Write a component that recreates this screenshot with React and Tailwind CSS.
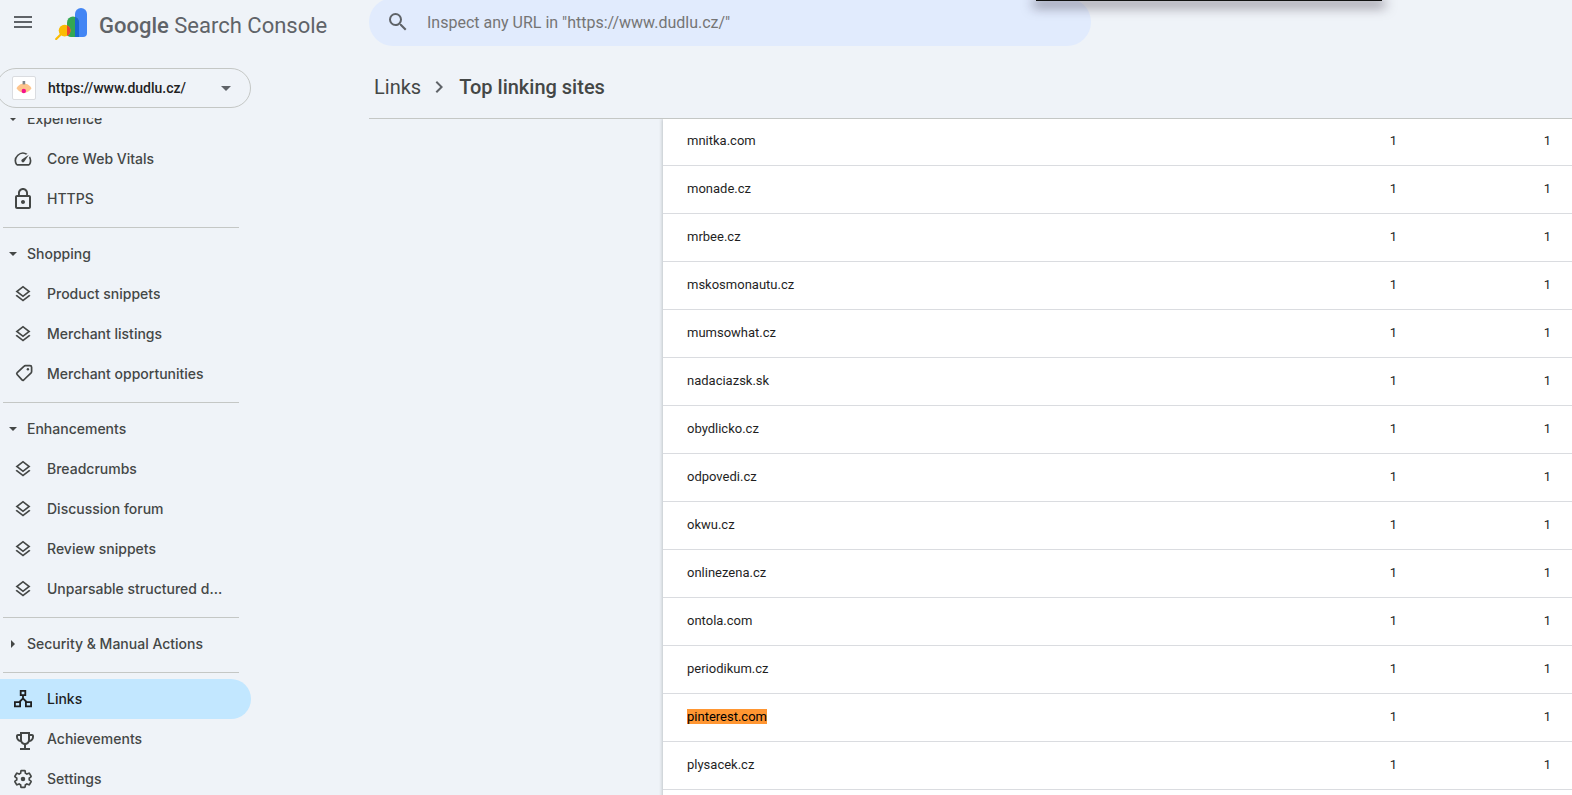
import React from "react";
import { MdMenu, MdSearch, MdChevronRight, MdOutlineSpeed, MdOutlineLayers, MdLockOutline } from "react-icons/md";

const TagIcon = () => (
  <svg viewBox="0 0 24 24" className="size-6" fill="none" stroke="currentColor" strokeWidth="1.7" strokeLinejoin="round" aria-hidden="true">
    <path d="M14.4 3.700H19Q20.600 3.700 20.600 5.300V9.600Q20.600 10.300 20.100 10.900L12.700 18Q11.800 18.800 11 17.900L6.100 12.500Q5.300 11.600 6.200 10.700L12.900 4.300Q13.500 3.700 14.400 3.700Z" />
    <circle cx="16.900" cy="7.300" r="1.200" fill="currentColor" stroke="none" />
  </svg>
);

const LinksIcon = () => (
  <svg viewBox="0 0 24 24" className="size-6" fill="none" stroke="currentColor" strokeWidth="1.8" aria-hidden="true">
    <path d="M9.7 3.9h4.6v4.2H9.7zM3.9 15.1h5.2v4.2H3.9zM14.9 15.1h5.2v4.2h-5.2z" />
    <path d="M12 8.5v3.4M12.3 11.2L8.4 15M11.7 11.2l3.9 3.8" />
  </svg>
);

const TrophyIcon = () => (
  <svg viewBox="-2 -2 24 24" className="size-6" fill="currentColor" aria-hidden="true">
    <path d="M19 5h-2V3H7v2H5c-1.1 0-2 .9-2 2v1c0 2.55 1.92 4.63 4.39 4.94A5.01 5.01 0 0 0 11 15.9V19H7v2h10v-2h-4v-3.1a5.01 5.01 0 0 0 3.61-2.96C19.08 12.63 21 10.55 21 8V7c0-1.1-.9-2-2-2zM5 8V7h2v3.82C5.84 10.4 5 9.3 5 8zm7 6c-1.65 0-3-1.35-3-3V5h6v6c0 1.65-1.35 3-3 3zm7-6c0 1.3-.84 2.4-2 2.82V7h2v1z" />
  </svg>
);

const GearIcon = () => (
  <svg viewBox="1 1 22 22" className="size-5" fill="none" stroke="currentColor" strokeWidth="2" aria-hidden="true">
    <path transform="translate(12 12) scale(.92) translate(-12 -12)" d="M19.43 12.98c.04-.32.07-.64.07-.98 0-.34-.03-.66-.07-.98l2.11-1.65c.19-.15.24-.42.12-.64l-2-3.46a.5.5 0 0 0-.61-.22l-2.49 1c-.52-.4-1.08-.73-1.69-.98l-.38-2.65A.488.488 0 0 0 14 2h-4c-.25 0-.46.18-.49.42l-.38 2.65c-.61.25-1.17.59-1.69.98l-2.49-1a.566.566 0 0 0-.18-.03c-.17 0-.34.09-.43.25l-2 3.46c-.13.22-.07.49.12.64l2.11 1.65c-.04.32-.07.65-.07.98 0 .33.03.66.07.98l-2.11 1.65c-.19.15-.24.42-.12.64l2 3.46a.5.5 0 0 0 .61.22l2.49-1c.52.4 1.08.73 1.69.98l.38 2.65c.03.24.24.42.49.42h4c.25 0 .46-.18.49-.42l.38-2.65c.61-.25 1.17-.59 1.69-.98l2.49 1c.06.02.12.03.18.03.17 0 .34-.09.43-.25l2-3.46c.12-.22.07-.49-.12-.64l-2.11-1.65z" />
    <circle cx="12" cy="12" r="2.5" fill="currentColor" stroke="none" />
  </svg>
);

const Logo = () => (
  <svg viewBox="0 0 32 32" className="size-8 shrink-0" aria-hidden="true">
    <path d="M20 6a6 6 0 0 1 12 0v19a4 4 0 0 1-4 4h-8z" fill="#4285f4" />
    <path d="M12 14.5a6 6 0 0 1 12 0V29h-8a4 4 0 0 1-4-4z" fill="#34a853" />
    <path d="M20 8.9a6 6 0 0 1 4 5.6V29h-4z" fill="#1967d2" />
    <path d="M1.2 31L6 26.2" stroke="#fbbc04" strokeWidth="2.2" strokeLinecap="round" />
    <circle cx="9.6" cy="22.6" r="5.9" fill="#fbbc04" />
    <path d="M12 17.2a5.9 5.9 0 0 1 0 10.8z" fill="#ea4335" />
  </svg>
);

const Caret = ({ open }) => (
  <svg viewBox="0 0 8 8" className="size-2 shrink-0" fill="currentColor" aria-hidden="true">
    {open ? <path d="M0 2h8L4 6z" /> : <path d="M2 0v8l4-4z" />}
  </svg>
);

const icons = {
  speed: <MdOutlineSpeed className="size-5" />,
  lock: <MdLockOutline className="size-6" />,
  layers: <MdOutlineLayers className="size-5" />,
  tag: <TagIcon />,
  links: <LinksIcon />,
  trophy: <TrophyIcon />,
  gear: <GearIcon />,
};

const Item = ({ icon, label, active }) => (
  <li>
    <a
      href="#"
      aria-current={active ? "page" : undefined}
      className={`flex h-10 items-center gap-3 rounded-r-full pl-[11px] pr-6 ${active ? "bg-[#c2e7ff] text-[#1f1f1f]" : "text-[#444746]"}`}
    >
      <span className="flex size-6 shrink-0 items-center justify-center">{icons[icon]}</span>
      <span className="truncate">{label}</span>
    </a>
  </li>
);

const Group = ({ label, open = true, items = [] }) => (
  <section>
    <button type="button" aria-expanded={open} className="flex h-10 w-full items-center gap-[10px] pl-[9px] text-left">
      <Caret open={open} />
      {label}
    </button>
    <ul>
      {items.map(([icon, text]) => (
        <Item key={text} icon={icon} label={text} />
      ))}
    </ul>
  </section>
);

const Divider = () => <hr className="mb-1.5 ml-[3px] mr-3 mt-2 border-[#c4c7c5]" />;

const sites = [
  "mnitka.com", "monade.cz", "mrbee.cz", "mskosmonautu.cz", "mumsowhat.cz", "nadaciazsk.sk", "obydlicko.cz",
  "odpovedi.cz", "okwu.cz", "onlinezena.cz", "ontola.com", "periodikum.cz", "pinterest.com", "plysacek.cz",
];

export default function App() {
  return (
    <div className="relative flex h-screen overflow-hidden bg-[#eff3f8] font-['Roboto',sans-serif] text-[#1f1f1f]">
      <aside className="flex w-[369px] shrink-0 flex-col">
        <header className="flex h-11 shrink-0 items-center pl-[11px] text-[#5f6368]">
          <button type="button" aria-label="Main menu" className="mr-5 flex size-6 items-center justify-center">
            <MdMenu className="size-6" />
          </button>
          <a href="#" className="flex items-center gap-3 whitespace-nowrap pt-1">
            <Logo />
            <span className="pt-1 text-[22px] leading-7">
              <span className="font-medium">Google</span> Search Console
            </span>
          </a>
        </header>
        <button
          type="button"
          className="-ml-1 mt-6 flex h-10 w-[255px] shrink-0 items-center rounded-full border border-[#c4c7c5] pl-[15px] pr-[19px] text-sm font-medium"
        >
          <span className="mr-3 flex size-6 items-center justify-center rounded-xs border border-[#dadce0] bg-white">
            <svg viewBox="0 0 16 16" className="size-4" aria-hidden="true">
              <path d="M.5 8.2C3 4.2 6 3.5 8 3.5s5 .7 7.500 4.700C13 12 10.500 12.500 8 12.500S3 12 .5 8.200z" fill="#fdc48c" />
              <path d="M6.600 1h2.600v3.400H6.600z" fill="#80868b" />
              <circle cx="7.800" cy="11" r="2.200" fill="#f5128c" />
            </svg>
          </span>
          https://www.dudlu.cz/
          <svg viewBox="0 0 10 5" className="ml-auto h-[5px] w-[10px] fill-[#5f6368]" aria-hidden="true">
            <path d="M0 0h10L5 5z" />
          </svg>
        </button>
        <div className="mt-[10px] w-[251px] grow overflow-hidden">
          <nav className="-mt-[19px] font-['Inter',sans-serif] text-sm font-medium text-[#444746]">
            <Group label="Experience" items={[["speed", "Core Web Vitals"], ["lock", "HTTPS"]]} />
            <Divider />
            <Group
              label="Shopping"
              items={[["layers", "Product snippets"], ["layers", "Merchant listings"], ["tag", "Merchant opportunities"]]}
            />
            <Divider />
            <Group
              label="Enhancements"
              items={[
                ["layers", "Breadcrumbs"],
                ["layers", "Discussion forum"],
                ["layers", "Review snippets"],
                ["layers", "Unparsable structured data"],
              ]}
            />
            <Divider />
            <Group label="Security & Manual Actions" open={false} />
            <Divider />
            <ul>
              <Item icon="links" label="Links" active />
              <Item icon="trophy" label="Achievements" />
              <Item icon="gear" label="Settings" />
            </ul>
          </nav>
        </div>
      </aside>

      <main className="flex min-w-0 grow flex-col">
        <label className="-mt-0.5 flex h-12 w-full max-w-[722px] shrink-0 items-center gap-[17px] rounded-full bg-[#e1ebfd] pl-[17px] pr-6 text-[#5f6368]">
          <MdSearch className="size-6 shrink-0" />
          <input
            type="search"
            aria-label="Inspect any URL"
            placeholder={'Inspect any URL in "https://www.dudlu.cz/"'}
            className="w-full bg-transparent pt-0.5 text-base outline-none placeholder:text-[#757575]"
          />
        </label>
        <div className="flex h-[73px] shrink-0 items-center gap-2 border-b border-[#c4c7c5] pl-[5px] pt-[10px] text-xl text-[#444746]">
          <a href="#">Links</a>
          <MdChevronRight className="-ml-0.5 size-6 text-[#5f6368]" />
          <h1 className="font-medium">Top linking sites</h1>
        </div>
        <div className="min-h-0 grow overflow-hidden pl-[294px]">
          <div className="-mb-2 flow-root min-h-full bg-white pb-2 shadow-[0_1px_3px_1px_rgba(60,64,67,0.25)]">
            <table className="-mt-0.5 w-full table-fixed border-collapse text-[13px]">
              <colgroup>
                <col />
                <col className="w-[200px]" />
                <col className="w-[175px]" />
              </colgroup>
              <tbody>
                {sites.map((site) => (
                  <tr key={site} className="h-12 border-b border-[#dadce0]">
                    <td className="pl-6">
                      {site === "pinterest.com" ? <mark className="bg-[#ff9632] text-black">{site}</mark> : site}
                    </td>
                    <td className="text-right">1</td>
                    <td className="pr-[21px] text-right">1</td>
                  </tr>
                ))}
              </tbody>
            </table>
          </div>
        </div>
      </main>

      <div className="absolute right-[190px] top-0 h-px w-[346px] bg-[#111] shadow-[0_3px_12px_3px_rgba(32,20,40,0.5)]" />
    </div>
  );
}
